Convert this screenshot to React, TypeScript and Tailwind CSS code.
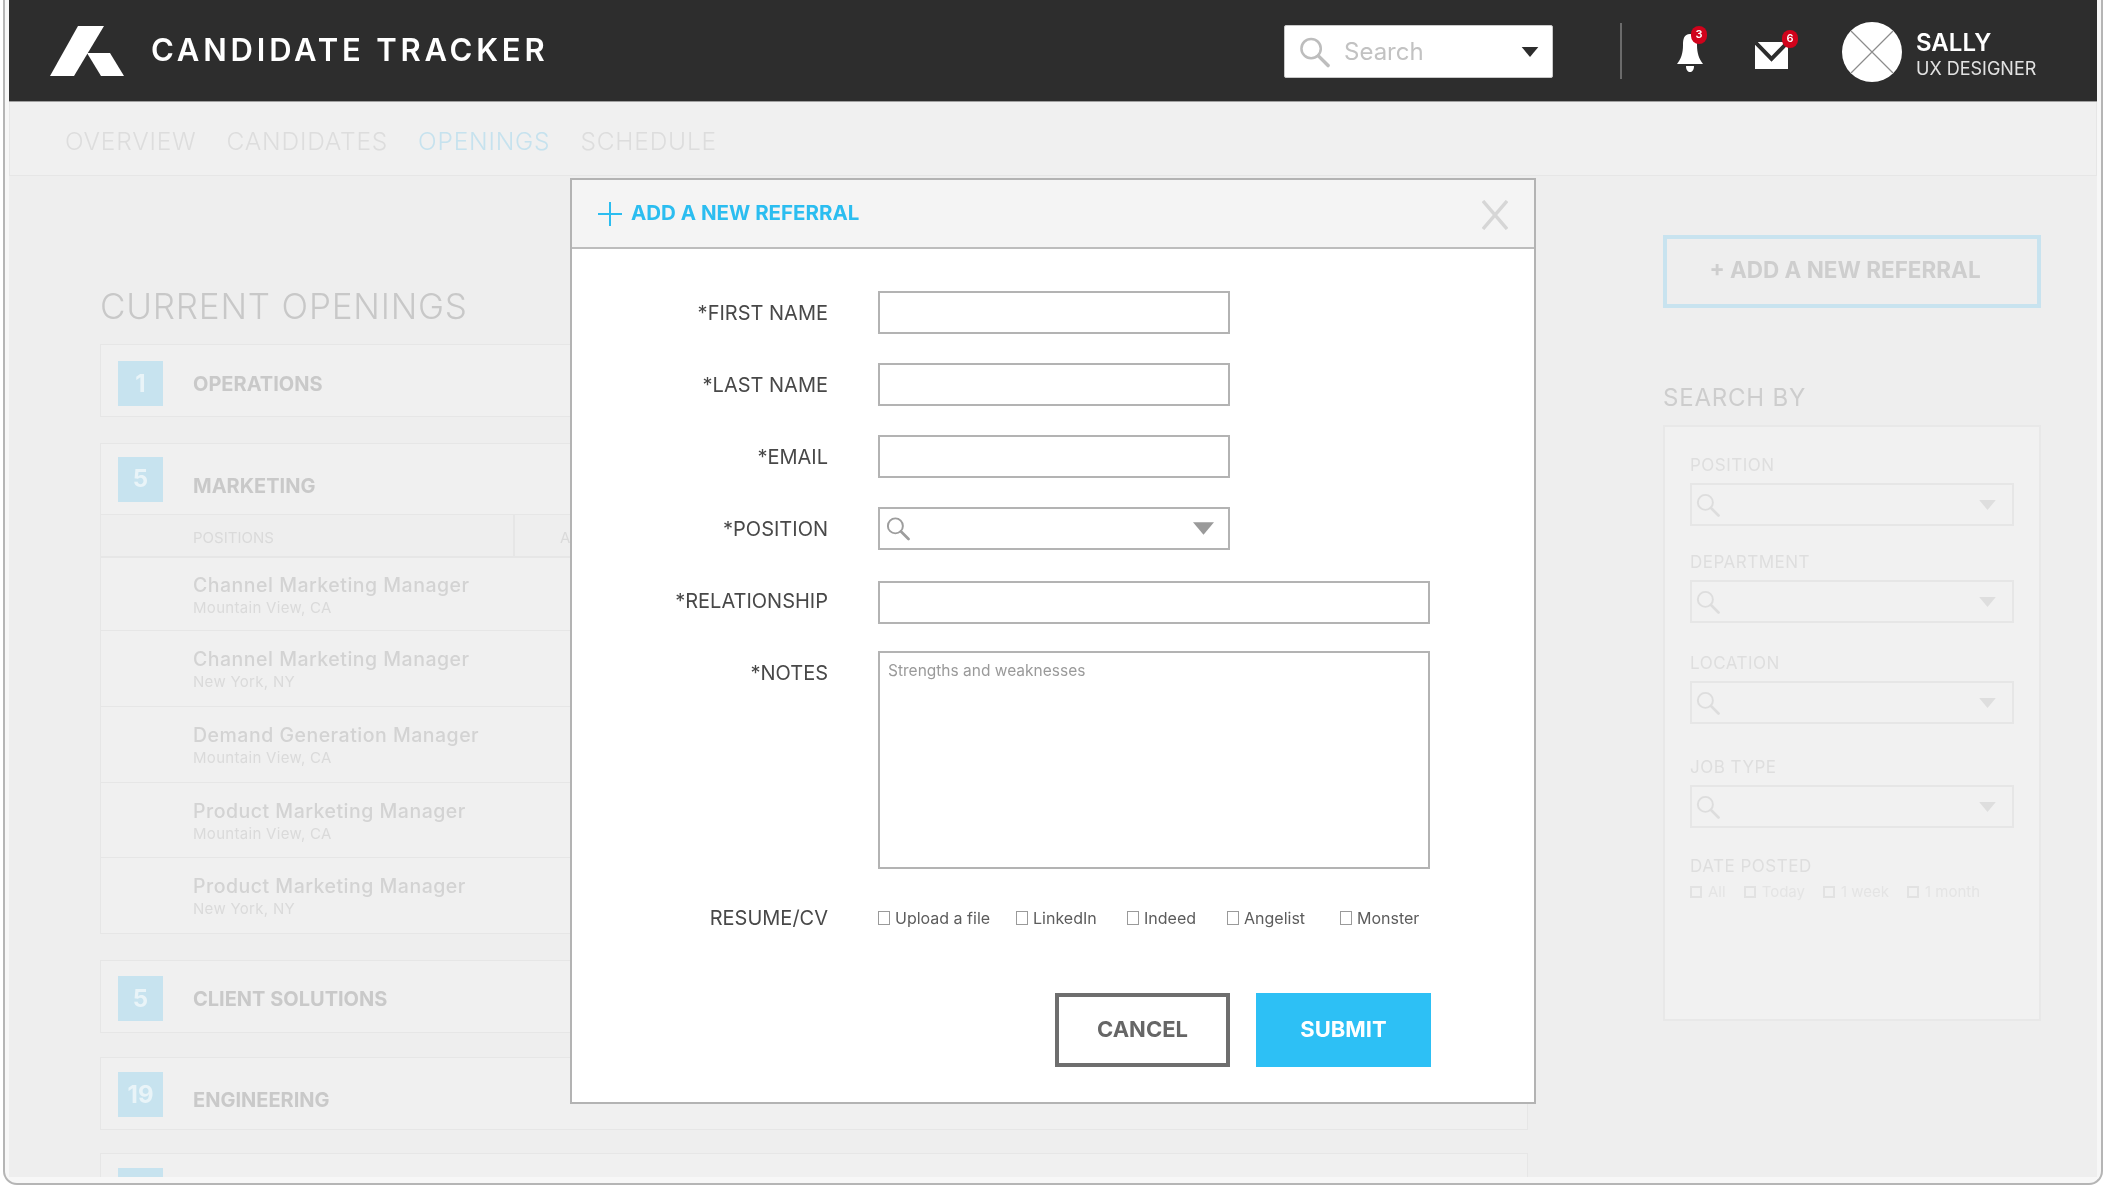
import { Fragment } from "react";

const FONT = "font-['Inter','Liberation_Sans',sans-serif]";

const NAV = [
  { label: "OVERVIEW", cls: "text-[#dddddd]" },
  { label: "CANDIDATES", cls: "text-[#dddddd]" },
  { label: "OPENINGS", cls: "text-[#c6e2ee]" },
  { label: "SCHEDULE", cls: "text-[#dddddd]" },
];

const POSITIONS = [
  { name: "Channel Marketing Manager", place: "Mountain View, CA", h: "h-[73px]" },
  { name: "Channel Marketing Manager", place: "New York, NY", h: "h-[76px]" },
  { name: "Demand Generation Manager", place: "Mountain View, CA", h: "h-[76px]" },
  { name: "Product Marketing Manager", place: "Mountain View, CA", h: "h-[75px]" },
  { name: "Product Marketing Manager", place: "New York, NY", h: "h-[75px]" },
];

const FILTERS = [
  { label: "POSITION", cls: "mt-[28px]" },
  { label: "DEPARTMENT", cls: "mt-[26px]" },
  { label: "LOCATION", cls: "mt-[30px]" },
  { label: "JOB TYPE", cls: "mt-[33px]" },
];

const DATES = ["All", "Today", "1 week", "1 month"];

const SOURCES = [
  { label: "Upload a file", cls: "w-[138px]" },
  { label: "LinkedIn", cls: "w-[111px]" },
  { label: "Indeed", cls: "w-[100px]" },
  { label: "Angelist", cls: "w-[113px]" },
  { label: "Monster", cls: "w-[80px]" },
];

function SearchIcon({ className, stroke }: { className: string; stroke: string }) {
  return (
    <svg viewBox="0 0 32 32" className={className} fill="none" stroke={stroke}>
      <circle cx="12.5" cy="12.5" r="10" strokeWidth="2.6" />
      <path d="M20 20 L30 30" strokeWidth="3.6" strokeLinecap="round" />
    </svg>
  );
}

function Caret({ className, fill }: { className: string; fill: string }) {
  return (
    <svg viewBox="0 0 20 12" className={className}>
      <path d="M0 0 H20 L10 12 Z" fill={fill} />
    </svg>
  );
}

function Logo() {
  return (
    <svg viewBox="0 0 74 50" className="w-[74px] h-[50px]">
      <path d="M0 50 L28 0 H54 L24 50 Z" fill="#fff" />
      <path d="M37 27 H60 L74 50 H51 Z" fill="#fff" />
    </svg>
  );
}

function Bell() {
  return (
    <div className="relative w-[32px] h-[42px]">
      <svg viewBox="0 0 28 40" className="absolute left-[1px] top-[2px] w-[28px] h-[40px]">
        <path
          d="M14 1 C8 1 7 6 7 12 C7 20 5 26 1 31 H27 C23 26 21 20 21 12 C21 6 20 1 14 1 Z"
          fill="#fff"
        />
        <path d="M10 33 H18 C18 37 16 39 14 39 C12 39 10 37 10 33 Z" fill="#fff" />
      </svg>
      <span className="absolute left-[16px] -top-[5px] w-[16px] h-[18px] rounded-full bg-[#d0021b] text-white text-[11px] font-semibold flex items-center justify-center">
        3
      </span>
    </div>
  );
}

function Mail() {
  return (
    <div className="relative w-[36px] h-[30px]">
      <svg viewBox="0 0 33 27" className="absolute left-0 top-[3px] w-[33px] h-[27px]">
        <rect width="33" height="27" fill="#fff" />
        <path d="M0 0 L16.5 17 L33 0" fill="none" stroke="#2d2d2d" strokeWidth="4" />
      </svg>
      <span className="absolute left-[27px] -top-[9px] w-[16px] h-[18px] rounded-full bg-[#d0021b] text-white text-[11px] font-semibold flex items-center justify-center">
        6
      </span>
    </div>
  );
}

function Avatar() {
  return (
    <svg viewBox="0 0 60 60" className="w-[60px] h-[60px]">
      <circle cx="30" cy="30" r="30" fill="#fff" />
      <path d="M9 9 L51 51 M51 9 L9 51" stroke="#8c8c8c" strokeWidth="1.2" />
    </svg>
  );
}

function Badge({ value, className }: { value: string; className?: string }) {
  return (
    <div className={`w-[45px] h-[45px] bg-[#c7e3ef] flex items-center justify-center text-[24px] font-bold text-[#e9f4f8] ${className ?? ""}`}>
      {value}
    </div>
  );
}

function SectionRow({ value, title, badgeCls, titleCls }: { value: string; title: string; badgeCls: string; titleCls: string }) {
  return (
    <div className="flex items-center h-[73px] pl-[17px] gap-[30px] bg-[#f0f0f0] border border-[#e6e6e6]">
      <Badge value={value} className={badgeCls} />
      <span className={`text-[20px] font-bold text-[#c9c9c9] ${titleCls}`}>{title}</span>
    </div>
  );
}

function Openings() {
  return (
    <div className="w-[1428px] shrink-0 pt-[109px]">
      <h2 className="h-[59px] text-[35px] leading-[43px] font-light tracking-[0.8px] text-[#c8c8c8]">
        CURRENT OPENINGS
      </h2>
      <SectionRow value="1" title="OPERATIONS" badgeCls="mt-[6px]" titleCls="mt-[6px]" />

      <div className="mt-[26px] bg-[#f0f0f0] border border-[#e6e6e6]">
        <div className="flex items-center h-[71px] pl-[17px] gap-[30px] border-b border-[#e6e6e6]">
          <Badge value="5" />
          <span className="mt-[13px] text-[20px] font-bold text-[#c9c9c9]">MARKETING</span>
        </div>
        <div className="flex h-[43px] border-b-2 border-[#e6e6e6] bg-[#eeeeee]">
          <div className="w-[414px] pl-[92px] pt-[5px] flex items-center border-r-2 border-[#e6e6e6] text-[15px] text-[#dadada]">
            POSITIONS
          </div>
          <div className="pl-[45px] pt-[5px] flex items-center text-[15px] text-[#dadada]">APPLICANTS</div>
        </div>
        {POSITIONS.map((p, i) => (
          <div
            key={i}
            className={`${p.h} pl-[92px] pt-[2px] flex flex-col justify-center ${i < POSITIONS.length - 1 ? "border-b border-[#e6e6e6]" : ""}`}
          >
            <span className="text-[19.5px] leading-[24px] font-medium tracking-[0.5px] text-[#d3d3d3]">{p.name}</span>
            <span className="text-[15px] leading-[21px] tracking-[0.3px] text-[#dadada]">{p.place}</span>
          </div>
        ))}
      </div>

      <div className="mt-[26px]">
        <SectionRow value="5" title="CLIENT SOLUTIONS" badgeCls="mt-[4px]" titleCls="mt-[4px]" />
      </div>
      <div className="mt-[24px]">
        <SectionRow value="19" title="ENGINEERING" badgeCls="mt-[2px]" titleCls="mt-[12px]" />
      </div>
      <div className="mt-[23px] h-[60px] pl-[17px] pt-[14px] bg-[#f0f0f0] border border-[#e6e6e6]">
        <div className="w-[45px] h-[45px] bg-[#c7e3ef]" />
      </div>
    </div>
  );
}

function SearchPanel() {
  return (
    <div className="w-[378px] shrink-0 ml-[135px] pt-[59px]">
      <button className="w-full h-[73px] pr-[14px] pb-[4px] border-4 border-[#c8e3ef] text-[22.5px] font-bold text-[#cecece]">
        + ADD A NEW REFERRAL
      </button>
      <h3 className="mt-[75px] h-[42px] text-[24px] leading-[30px] font-normal tracking-[0.8px] text-[#cdcdcd]">
        SEARCH BY
      </h3>
      <div className="h-[596px] px-[25px] bg-[#f1f1f1] border-2 border-[#e8e8e8]">
        {FILTERS.map((f) => (
          <Fragment key={f.label}>
            <div className={`${f.cls} text-[17px] leading-[20px] tracking-[0.5px] text-[#dedede]`}>{f.label}</div>
            <div className="mt-[8px] h-[43px] pl-[4px] pr-[14px] flex items-center justify-between border-2 border-[#e6e6e6]">
              <SearchIcon className="w-[24px] h-[24px]" stroke="#dddddd" />
              <Caret className="w-[21px] h-[10px]" fill="#dedede" />
            </div>
          </Fragment>
        ))}
        <div className="mt-[28px] text-[17px] leading-[20px] tracking-[0.5px] text-[#dedede]">DATE POSTED</div>
        <div className="mt-[7px] flex text-[15px] leading-[18px] text-[#e4e4e4]">
          {DATES.map((d) => (
            <span key={d} className="mr-[18px] flex items-center gap-[6px]">
              <span className="w-[12px] h-[12px] border-2 border-[#e2e2e2]" />
              {d}
            </span>
          ))}
        </div>
      </div>
    </div>
  );
}

function ReferralModal() {
  const labelCls = "w-[256px] text-right text-[20px] text-[#484848]";
  const fieldCls = "h-[43px] border-2 border-[#b3b3b3] bg-white";
  return (
    <div className="absolute left-[565px] top-[178px] w-[966px] h-[926px] bg-white border-2 border-[#b3b3b3]">
      <div className="h-[69px] px-[26px] flex items-center justify-between bg-[#f4f4f4] border-b-2 border-[#bdbdbd]">
        <div className="flex items-center gap-[9px]">
          <svg viewBox="0 0 24 24" className="w-[24px] h-[24px]" stroke="#2bbdf0" strokeWidth="2">
            <path d="M12 0 V24 M0 12 H24" />
          </svg>
          <span className="text-[20.5px] font-bold text-[#2bbdf0]">ADD A NEW REFERRAL</span>
        </div>
        <svg viewBox="0 0 26 30" className="w-[26px] h-[30px] mt-[3px]" stroke="#d6d6d6" strokeWidth="3.4">
          <path d="M1 1 L25 29 M25 1 L1 29" />
        </svg>
      </div>

      <div className="pt-[42px] flex flex-col gap-[29px]">
        {["*FIRST NAME", "*LAST NAME", "*EMAIL"].map((label) => (
          <div key={label} className="flex items-center gap-[50px]">
            <label className={labelCls}>{label}</label>
            <div className={`${fieldCls} w-[352px]`} />
          </div>
        ))}
        <div className="flex items-center gap-[50px]">
          <label className={labelCls}>*POSITION</label>
          <div className={`${fieldCls} w-[352px] pl-[6px] pr-[14px] flex items-center justify-between`}>
            <SearchIcon className="w-[24px] h-[25px]" stroke="#9d9d9d" />
            <Caret className="w-[21px] h-[13px]" fill="#9a9a9a" />
          </div>
        </div>
        <div className="mt-[2px] -mb-[2px] flex items-center gap-[50px]">
          <label className={`${labelCls} -mt-[3px]`}>*RELATIONSHIP</label>
          <div className={`${fieldCls} w-[552px]`} />
        </div>
        <div className="flex items-start gap-[50px]">
          <label className={`${labelCls} pt-[7px]`}>*NOTES</label>
          <div className="w-[552px] h-[218px] border-2 border-[#b3b3b3] pl-[8px] pt-[6px] text-[15.5px] text-[#9a9a9a]">
            Strengths and weaknesses
          </div>
        </div>
      </div>

      <div className="mt-[34px] flex items-center gap-[50px]">
        <label className={labelCls}>RESUME/CV</label>
        <div className="flex">
          {SOURCES.map((s) => (
            <span key={s.label} className={`${s.cls} flex items-center gap-[5px] text-[16px] text-[#5c5c5c]`}>
              <span className="w-[12px] h-[14px] border border-[#9a9a9a]" />
              {s.label}
            </span>
          ))}
        </div>
      </div>

      <div className="mt-[60px] pr-[103px] flex justify-end gap-[26px]">
        <button className="w-[175px] h-[74px] pb-[2px] border-[4px] border-[#6e6e6e] text-[22px] font-bold text-[#666666]">
          CANCEL
        </button>
        <button className="w-[175px] h-[74px] pb-[2px] bg-[#2dc0f5] text-[22px] font-bold text-white">SUBMIT</button>
      </div>
    </div>
  );
}

export default function App() {
  return (
    <div className={`${FONT} w-full h-[1187px] bg-white px-[3px] pb-[2px] overflow-hidden blur-[0.4px]`}>
      <div className="relative h-full flex flex-col px-[4px] pb-[6px] bg-[#f7f7f7] border-x-2 border-b-2 border-[#b5b5b5] rounded-b-[14px] overflow-hidden">
        <header className="h-[102px] shrink-0 pl-[41px] flex items-center bg-[#2d2d2d] border-b border-[#a0a0a0]">
          <Logo />
          <h1 className="ml-[27px] text-[31px] font-semibold tracking-[3.8px] text-white">CANDIDATE TRACKER</h1>
          <div className="ml-auto mt-[2px] w-[269px] h-[53px] pl-[14px] pr-[13px] flex items-center bg-white border border-[#c9c9c9] rounded-[2px]">
            <SearchIcon className="w-[31px] h-[32px]" stroke="#bdbdbd" />
            <span className="ml-[14px] flex-1 text-[24px] text-[#c2c2c2]">Search</span>
            <Caret className="w-[18px] h-[10px]" fill="#2d2d2d" />
          </div>
          <div className="ml-[67px] w-[2px] h-[56px] bg-[#6b6b6b]" />
          <div className="ml-[53px] mt-[2px]">
            <Bell />
          </div>
          <div className="ml-[48px] mt-[6px]">
            <Mail />
          </div>
          <div className="ml-[51px] mt-[2px]">
            <Avatar />
          </div>
          <div className="ml-[14px] pt-[8px] w-[181px] text-white">
            <div className="text-[24px] leading-[28px] font-semibold">SALLY</div>
            <div className="text-[18px] leading-[24px] text-[#e2e2e2]">UX DESIGNER</div>
          </div>
        </header>

        <nav className="h-[74px] shrink-0 pl-[55px] pt-[6px] flex items-center gap-[30px] bg-[#f0f0f0] border-x border-b border-[#e6e6e6]">
          {NAV.map((n) => (
            <span key={n.label} className={`text-[24.5px] tracking-[0.8px] font-light ${n.cls}`}>
              {n.label}
            </span>
          ))}
        </nav>

        <main className="flex-1 min-h-0 pl-[91px] flex bg-[#eeeeee] overflow-hidden">
          <Openings />
          <SearchPanel />
        </main>

        <ReferralModal />
      </div>
    </div>
  );
}
